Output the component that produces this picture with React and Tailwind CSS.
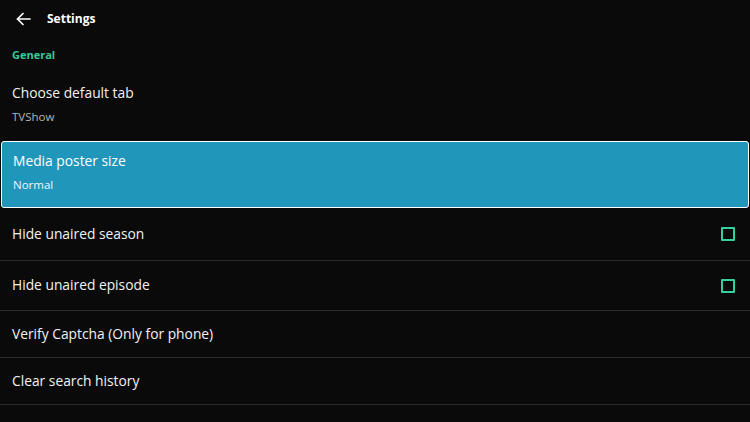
import React from "react";

const font = { fontFamily: '"Open Sans", "Noto Sans", sans-serif' };

function BackArrow() {
  return (
    <svg width="15" height="14" viewBox="0 0 15 14" fill="none" stroke="white" strokeWidth="1.7" strokeLinecap="round" strokeLinejoin="round">
      <path d="M14 7H1.5" />
      <path d="M7 1.5L1.5 7L7 12.5" />
    </svg>
  );
}

function CheckBox() {
  return <div className="w-[14px] h-[14px] border-2 border-[#34cfa0] rounded-[1px]" />;
}

function ToggleRow({ label, border }) {
  return (
    <div className={`flex items-center justify-between pl-3 pr-[15px] ${border}`}>
      <span className="text-[13.8px] font-medium text-[#f2f2f2]">{label}</span>
      <CheckBox />
    </div>
  );
}

export default function App() {
  return (
    <div className="w-[750px] h-[422px] bg-[#0a0a0a] overflow-hidden text-white" style={font}>
      {/* top bar */}
      <div className="h-[38px] flex items-center pl-[16px]">
        <BackArrow />
        <span className="ml-[16px] text-[12px] font-bold">Settings</span>
      </div>

      {/* section label */}
      <div className="h-[35px] flex items-center pl-3 text-[11px] font-bold text-[#37c99a]">General</div>

      {/* default tab */}
      <div className="h-[68px] flex flex-col pl-3 pt-[11px]">
        <span className="text-[13.8px] font-medium text-[#f2f2f2] leading-[18px]">Choose default tab</span>
        <span className="mt-[8px] text-[11.5px] font-medium text-[#b5b5b5] leading-[14px]">TVShow</span>
      </div>

      {/* focused item */}
      <div className="h-[67px] mx-[1px] flex flex-col pl-[11px] pt-[10px] bg-[#2196bb] border border-white rounded-[3px]">
        <span className="text-[13.8px] font-medium text-white leading-[18px]">Media poster size</span>
        <span className="mt-[8px] text-[11.5px] font-medium text-[#eef6fa] leading-[14px]">Normal</span>
      </div>

      <div className="flex flex-col">
        <ToggleRow label="Hide unaired season" border="h-[53px] border-b border-[#2c2c2c]" />
        <ToggleRow label="Hide unaired episode" border="h-[50px] border-b border-[#2c2c2c]" />
        <div className="h-[47px] flex items-center pl-3 border-b border-[#2c2c2c]">
          <span className="text-[13.8px] font-medium text-[#f2f2f2]">Verify Captcha (Only for phone)</span>
        </div>
        <div className="h-[47px] flex items-center pl-3 border-b border-[#2c2c2c]">
          <span className="text-[13.8px] font-medium text-[#f2f2f2]">Clear search history</span>
        </div>
      </div>
    </div>
  );
}
